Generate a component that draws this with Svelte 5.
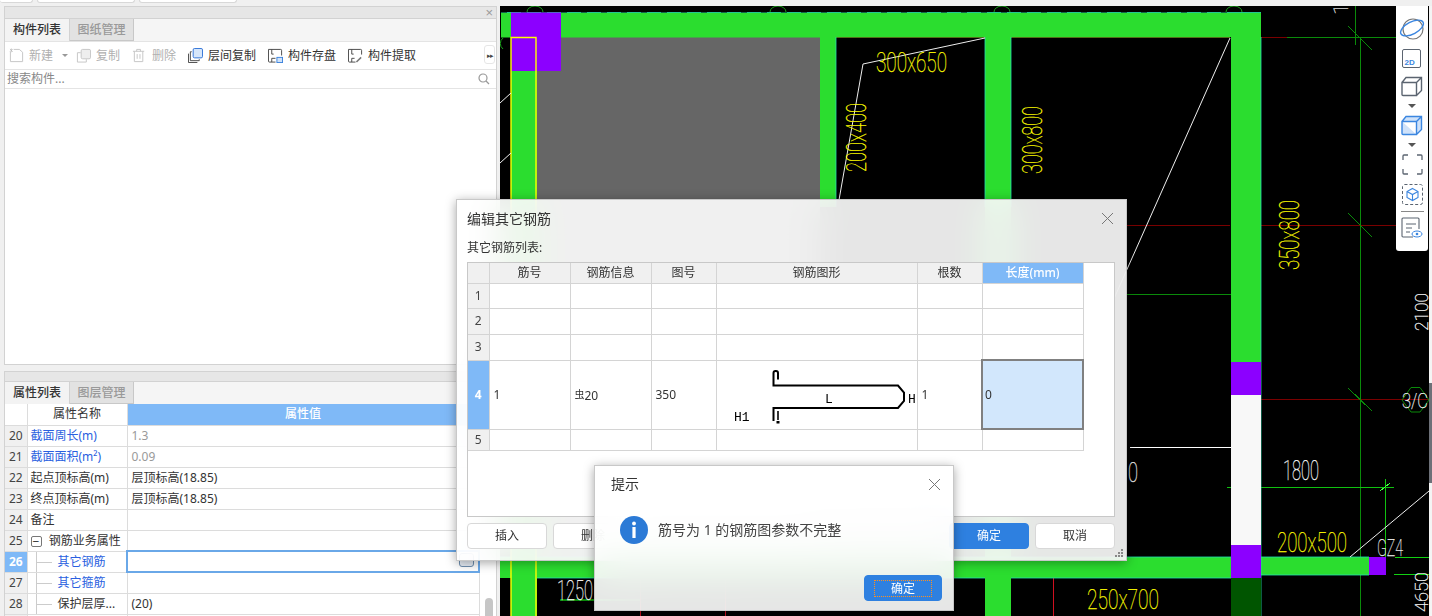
<script>
  const tools = [
    { icon: "new", label: "新建", off: true, caret: true },
    { icon: "copy", label: "复制", off: true },
    { icon: "trash", label: "删除", off: true },
    { icon: "floor", label: "层间复制" },
    { icon: "save", label: "构件存盘" },
    { icon: "pick", label: "构件提取" }
  ];

  const props = [
    { n: 20, name: "截面周长(m)", value: "1.3", link: true, ro: true },
    { n: 21, name: "截面面积(m²)", value: "0.09", link: true, ro: true },
    { n: 22, name: "起点顶标高(m)", value: "层顶标高(18.85)" },
    { n: 23, name: "终点顶标高(m)", value: "层顶标高(18.85)" },
    { n: 24, name: "备注", value: "" },
    { n: 25, name: "钢筋业务属性", value: "", group: true },
    { n: 26, name: "其它钢筋", value: "", link: true, child: true, active: true },
    { n: 27, name: "其它箍筋", value: "", link: true, child: true },
    { n: 28, name: "保护层厚...", value: "(20)", child: true },
    { n: "", name: "", value: "" }
  ];

  const bars = [
    { n: 1 },
    { n: 2 },
    { n: 3 },
    { n: 4, active: true },
    { n: 5 }
  ];

  const cols = ["筋号", "钢筋信息", "图号", "钢筋图形", "根数"];

  // yellow section labels on the drawing: x, y, length, rotated
  const sizes = [
    { t: "300x650", x: 876, y: 72, len: 71, h: 28 },
    { t: "200x500", x: 1277, y: 552, len: 70, h: 28 },
    { t: "250x700", x: 1087, y: 609, len: 72, h: 28 },
    { t: "200x400", x: 866, y: 172, len: 69, h: 28, rot: true },
    { t: "300x800", x: 1042, y: 174, len: 68, h: 28, rot: true },
    { t: "350x800", x: 1299, y: 270, len: 70, h: 28, rot: true }
  ];
</script>

<div class="app">
  <div class="topstrip">
    <span class="toptab first"></span>
    <span class="toptab"></span>
    <span class="toptab"></span>
  </div>

  <div class="main">
    <div class="side">
      <section class="panel upper">
        <div class="band"><span class="bandx">×</span></div>
        <div class="tabs">
          <span class="tab on">构件列表</span>
          <span class="tab">图纸管理</span>
        </div>
        <div class="tools">
          {#each tools as t}
            <span class="tool" class:off={t.off}>
              <svg class="ticon" viewBox="0 0 16 16" fill="none">
                {#if t.icon === "new"}
                  <path d="M1.5 4v10.5h13V4.5L11 1.5H5" stroke="#c4c4c4" />
                  <path d="M1 1l3 3M4 1L1 4M2.5 .5v4" stroke="#bbb" stroke-width=".8" />
                {:else if t.icon === "copy"}
                  <rect x="5.5" y="1.5" width="10" height="10" rx="1.5" stroke="#c4c4c4" fill="#eee" />
                  <path d="M5 5H1.5v10H11v-3" stroke="#c4c4c4" />
                {:else if t.icon === "trash"}
                  <path d="M1 3.5h12M5 3.5V1.5h4v2M2.5 3.5v11h9v-11M5.5 6.5v5M8.5 6.5v5" stroke="#c4c4c4" />
                {:else if t.icon === "floor"}
                  <rect x="5.5" y=".5" width="10" height="10" rx="1.5" stroke="#2b6fd6" fill="#d6e6fa" />
                  <path d="M4 4H2.5v9.5H12V12M.5 6v9.5H10" stroke="#444" />
                {:else if t.icon === "save"}
                  <path d="M8 15H1.5a1 1 0 0 1-1-1V1.5h13a1 1 0 0 1 1 1V8" stroke="#444" />
                  <path d="M4 1.5v5h2M4 15v-4h4" stroke="#444" />
                  <rect x="9.5" y="10" width="6" height="5.5" fill="#cfe2f8" stroke="#3b82dc" />
                {:else}
                  <path d="M8 15H1.5a1 1 0 0 1-1-1V1.5h13a1 1 0 0 1 1 1V7" stroke="#444" />
                  <path d="M4 1.5v5h2M4 15v-4h3" stroke="#444" />
                  <path d="M9 15l5-5" stroke="#777" stroke-width="1.6" />
                {/if}
              </svg>
              <span class="tlabel">{t.label}</span>
              {#if t.caret}<i class="caret"></i>{/if}
            </span>
          {/each}
          <span class="more">▸▸</span>
        </div>
        <div class="search">
          <span>搜索构件...</span>
          <svg width="12" height="12" viewBox="0 0 12 12" fill="none" stroke="#999" stroke-width="1.2">
            <circle cx="5" cy="5" r="4" /><path d="M8 8l3 3" />
          </svg>
        </div>
        <div class="blank"></div>
      </section>

      <section class="panel lower">
        <div class="band short"></div>
        <div class="tabs low">
          <span class="tab on">属性列表</span>
          <span class="tab">图层管理</span>
        </div>
        <div class="propwrap">
          <table class="props">
            <colgroup><col style="width:22px" /><col style="width:100px" /><col /></colgroup>
            <thead>
              <tr><th class="corner"></th><th>属性名称</th><th class="hl">属性值</th></tr>
            </thead>
            <tbody>
              {#each props as p}
                <tr>
                  <td class="num" class:numon={p.active}>{p.n}</td>
                  <td class="name" class:link={p.link}>
                    {#if p.group}
                      <span class="minus">−</span>
                    {/if}
                    {#if p.child}<i class="branch"></i>{/if}
                    {p.name}
                  </td>
                  <td class="val" class:ro={p.ro} class:sel={p.active}>
                    {p.value}
                    {#if p.active}<i class="cellbtn"></i>{/if}
                  </td>
                </tr>
              {/each}
            </tbody>
          </table>
          <div class="scroll"><i></i></div>
        </div>
      </section>
    </div>

    <div class="canvas">
      <svg width="932" height="610" viewBox="500 6 932 610" class="cad">
        <rect x="500" y="6" width="932" height="610" fill="#000" />
        <rect x="1429" y="6" width="3" height="610" fill="#f4f4f4" />

        <!-- axis lines behind everything -->
        <g fill="none" shape-rendering="crispEdges">
          <path d="M1261 37.5H1396M1261 225.5H1396M1261 399.5H1429M836 37.5H985M1011 37.5H1231M1127 225.5H1231" stroke="#7a0000" />
          <path d="M1287 37.5H1396M1355.5 6V45M1360.5 38V616M1348 26L1372 50M1348 213L1372 237M1348 388L1372 411" stroke="#0a8a0a" />
          <path d="M1227 487.5H1394M1385.5 479V557" stroke="#10c010" />
          <path d="M1380 491L1390 483" stroke="#40ff40" />
          <path d="M1127 294.5H1231" stroke="#0a8a0a" />
          <path d="M1130 447.5H1231" stroke="#fff" />
          <path d="M1053.5 578V616M640.5 578V616M725.5 578V616" stroke="#d01020" />
          <path d="M1395 557.5H1429M1394 574.5H1429" stroke="#12d012" />
          <path d="M560 600H640" stroke="#0a8a0a" stroke-width="2" />
        </g>

        <!-- slab -->
        <rect x="537" y="37" width="283" height="523" fill="#666" />

        <!-- beams -->
        <g fill="#2bdd2f">
          <rect x="501" y="12.5" width="760" height="25" />
          <rect x="511" y="37" width="26" height="579" />
          <rect x="820" y="37" width="16" height="170" />
          <rect x="985" y="37" width="26" height="579" />
          <rect x="1231" y="37" width="30" height="325" />
          <rect x="500" y="557" width="731" height="21" />
          <rect x="1261" y="557" width="108" height="18" />
        </g>
        <g fill="none" stroke="#25e0b0" stroke-width=".8">
          <path d="M501 12.5H1261M836 37V207M985 37V207M1011 37V207M1261 37V616M500 557H511M537 557H1231M1261 557H1369M1261 575H1369M537 578H985M1011 578H1231" />
        </g>
        <path d="M501 12H1231" stroke="#000" stroke-dasharray="6 14" fill="none" />
        <path d="M1230.5 37V362" stroke="#000" stroke-dasharray="14 6" fill="none" />

        <rect x="1231" y="395" width="30" height="150" fill="#f8f8f8" />
        <rect x="1231" y="578" width="30" height="38" fill="#005500" />
        <g fill="#8c00ff">
          <rect x="511" y="12.5" width="50" height="58.5" />
          <rect x="1231" y="362" width="30" height="33" />
          <rect x="1231" y="545" width="30" height="33" />
          <rect x="1369" y="557" width="17" height="18" />
        </g>
        <path d="M511 616V37.5H536V616" stroke="#ff0" stroke-width="1.4" fill="none" />

        <!-- grid bubbles along the top edge -->
        <g fill="none" stroke="#18a018">
          <path d="M527 12a8 6 0 0 1 16 0M770 12a8 6 0 0 1 16 0M994 12a8 6 0 0 1 16 0M1226 12a8 6 0 0 1 16 0M503 38a7 7 0 0 0 0 11" />
          <path d="M1402 400l9-12.5h9l9 12.5-9 12h-9z" stroke="#0a8a0a" />
        </g>

        <!-- white slab diagonals -->
        <g fill="none" stroke="#eee">
          <path d="M985 38L863 64L839 200" />
          <path d="M1230 38L1100 330" />
          <path d="M500 103L511 93M500 163L511 153" />
          <path d="M1350 557L1429 491" />
        </g>

        {#each sizes as s}
          <text
            class="cadtext"
            x={s.rot ? 0 : s.x}
            y={s.rot ? 0 : s.y}
            transform={s.rot ? `translate(${s.x} ${s.y}) rotate(-90)` : undefined}
            textLength={s.len}
            lengthAdjust="spacingAndGlyphs"
            font-size={s.h}
            fill="#ffff00"
            stroke="#ffff00"
          >{s.t}</text>
        {/each}

        <text class="cadtext" x="1283" y="480" textLength="36" lengthAdjust="spacingAndGlyphs" font-size="27" fill="#fff" stroke="#fff">1800</text>
        <text class="cadtext" x="1377" y="556" textLength="26" lengthAdjust="spacingAndGlyphs" font-size="24" fill="#eee" stroke="#eee">GZ4</text>
        <text class="cadtext" x="557" y="600" textLength="36" lengthAdjust="spacingAndGlyphs" font-size="27" fill="#fff" stroke="#fff">1250</text>
        <text class="cadtext" x="1128" y="482" textLength="10" lengthAdjust="spacingAndGlyphs" font-size="27" fill="#eee" stroke="#eee">0</text>
        <text class="cadtext" transform="translate(1428 331) rotate(-90)" textLength="38" lengthAdjust="spacingAndGlyphs" font-size="19" fill="#fff" stroke="#fff">2100</text>
        <text class="cadtext" transform="translate(1428 612) rotate(-90)" textLength="40" lengthAdjust="spacingAndGlyphs" font-size="19" fill="#fff" stroke="#fff">4650</text>
        <text class="cadtext" x="1402" y="408" font-size="21" textLength="26" lengthAdjust="spacingAndGlyphs" fill="#fff" stroke="#fff">3/C</text>
        <text class="cadtext" transform="translate(1348 15) rotate(-90)" font-size="21" fill="#ddd" stroke="#ddd">1</text>
        <rect x="1429" y="383" width="3" height="100" fill="#6d7078" />
      </svg>
    </div>
  </div>

  <aside class="viewbar">
    <svg width="26" height="26" viewBox="0 0 26 26" fill="none">
      <circle cx="14" cy="13" r="10" stroke="#777" stroke-width="1.2" />
      <ellipse cx="13" cy="12" rx="12.5" ry="6" transform="rotate(-28 13 12)" stroke="#3b86e0" stroke-width="1.4" />
    </svg>
    <svg width="20" height="20" viewBox="0 0 20 20" fill="none">
      <rect x=".5" y=".5" width="18" height="18" rx="1.5" stroke="#5b6470" />
      <text x="2.5" y="16" class="twod">2D</text>
    </svg>
    <svg width="22" height="21" viewBox="0 0 22 21" fill="none" stroke="#5b6470" stroke-width="1.4">
      <path d="M1 6.5v12a1 1 0 0 0 1 1h13.5v-13zM1 6.5L5 1.5h15.5v13l-5 5M15.5 6.5l5-5" />
    </svg>
    <i class="vcaret"></i>
    <svg width="22" height="21" viewBox="0 0 22 21" fill="#cfe2fa" stroke="#3b86e0" stroke-width="1.4">
      <path d="M1 6.5v12a1 1 0 0 0 1 1h13.5v-13zM1 6.5L5 1.5h15.5v13l-5 5M15.5 6.5l5-5" />
    </svg>
    <i class="vcaret"></i>
    <svg width="21" height="21" viewBox="0 0 21 21" fill="none" stroke="#5b6470" stroke-width="1.3">
      <path d="M1 6V2a1 1 0 0 1 1-1h4M15 1h4a1 1 0 0 1 1 1v4M20 15v4a1 1 0 0 1-1 1h-4M6 20H2a1 1 0 0 1-1-1v-4" />
    </svg>
    <svg class="boxed" width="21" height="21" viewBox="0 0 21 21" fill="none">
      <rect x=".5" y=".5" width="20" height="20" rx="2" stroke="#5b6470" stroke-dasharray="3 2" />
      <path d="M10.5 4.5l5.5 3v6l-5.5 3-5.5-3v-6zM5 7.5l5.5 3 5.5-3M10.5 10.5v6" stroke="#3b86e0" stroke-width="1.1" />
    </svg>
    <hr />
    <svg class="legend" width="22" height="21" viewBox="0 0 22 21" fill="none">
      <path d="M12 20H2a1 1 0 0 1-1-1V2a1 1 0 0 1 1-1h15a1 1 0 0 1 1 1v10" stroke="#5b6470" stroke-width="1.1" />
      <path d="M5 7h10M5 11h6M5 15h4" stroke="#5b6470" />
      <ellipse cx="16" cy="17" rx="5" ry="3" stroke="#3b86e0" />
      <circle cx="16" cy="17" r="1.3" fill="#3b86e0" />
    </svg>
  </aside>

  <div class="dialog editor">
    <header class="dhead">
      <h2>编辑其它钢筋</h2>
      <svg width="13" height="13" viewBox="0 0 13 13" stroke="#777" fill="none"><path d="M1 1l11 11M12 1L1 12" /></svg>
    </header>
    <p class="listlabel">其它钢筋列表:</p>
    <div class="gridbox">
      <table class="bars">
        <colgroup>
          <col style="width:21px" /><col style="width:81px" /><col style="width:81px" /><col style="width:65px" />
          <col style="width:201px" /><col style="width:65px" /><col style="width:101px" />
        </colgroup>
        <thead>
          <tr>
            <th></th>
            {#each cols as c}<th>{c}</th>{/each}
            <th class="hl">长度(mm)</th>
          </tr>
        </thead>
        <tbody>
          {#each bars as b}
            <tr class:tall={b.active} class:last={b.n === 5} class:firstrow={b.n === 1}>
              <td class="num" class:numon={b.active}>{b.n}</td>
              {#if b.active}
                <td>1</td>
                <td><span class="grade">虫</span>20</td>
                <td>350</td>
                <td class="shape">
                  <svg width="200" height="68" viewBox="0 0 200 68" fill="none">
                    <path d="M61 18.5V12a2 2 0 0 0-2-2h-.5a2 2 0 0 0-2 2V24.5H181l6 7V40l-6 7H56.5V60" stroke="#000" stroke-width="2" />
                    <path d="M61 50v9" stroke="#000" stroke-width="1.6" />
                    <rect x="59.5" y="60" width="3" height="2.5" fill="#000" />
                    <text x="108" y="42" class="mono">L</text>
                    <text x="191" y="42" class="mono">H</text>
                    <text x="17" y="60" class="mono">H1</text>
                  </svg>
                </td>
                <td class="count">1</td>
                <td class="editing">0</td>
              {:else}
                <td></td><td></td><td></td><td></td><td></td><td></td>
              {/if}
            </tr>
          {/each}
        </tbody>
      </table>
    </div>
    <footer class="dfoot">
      <button class="btn">插入</button>
      <button class="btn">删除</button>
      <span class="fill"></span>
      <button class="btn primary">确定</button>
      <button class="btn">取消</button>
    </footer>
    <svg class="grip" width="8" height="8" viewBox="0 0 8 8" fill="#888">
      <rect x="6" y="0" width="2" height="2" /><rect x="3" y="3" width="2" height="2" /><rect x="6" y="3" width="2" height="2" />
      <rect x="0" y="6" width="2" height="2" /><rect x="3" y="6" width="2" height="2" /><rect x="6" y="6" width="2" height="2" />
    </svg>
  </div>

  <div class="dialog prompt">
    <header class="phead">
      <h3>提示</h3>
      <svg width="13" height="13" viewBox="0 0 13 13" stroke="#777" fill="none"><path d="M1 1l11 11M12 1L1 12" /></svg>
    </header>
    <div class="pbody">
      <svg width="28" height="28" viewBox="0 0 28 28">
        <circle cx="14" cy="14" r="14" fill="#2b7ad6" />
        <circle cx="14" cy="7.5" r="1.9" fill="#fff" />
        <rect x="12.4" y="11" width="3.2" height="11" fill="#fff" />
      </svg>
      <span>筋号为 1 的钢筋图参数不完整</span>
    </div>
    <div class="pfoot">
      <button class="btn primary okbtn"><span>确定</span></button>
    </div>
  </div>
</div>

<style>
  :global(body) {
    margin: 0;
  }

  .app {
    position: relative;
    width: 1432px;
    height: 616px;
    overflow: hidden;
    background: #f0f0f0;
    color: #333;
    font: 12px/16px "Noto Sans", "Noto Sans CJK SC", sans-serif;
  }

  .topstrip {
    display: flex;
    gap: 4px;
    height: 6px;
    box-sizing: border-box;
  }
  .toptab {
    width: 98px;
    height: 3px;
    box-sizing: border-box;
    background: #fff;
    border: 1px solid #d8d8d8;
    border-top: 0;
    border-radius: 0 0 4px 4px;
  }
  .toptab.first {
    width: 33px;
    border-left: 0;
  }

  .main {
    display: flex;
    height: 610px;
  }

  .side {
    width: 500px;
    box-sizing: border-box;
    padding: 0 3px 0 4px;
    display: flex;
    flex-direction: column;
    gap: 6px;
    flex: none;
  }

  .panel {
    display: flex;
    flex-direction: column;
    border: 1px solid #d2d2d2;
    background: #fff;
    min-height: 0;
  }
  .upper {
    height: 357px;
    flex: none;
  }
  .lower {
    flex: 1;
    border-bottom: 0;
    overflow: hidden;
  }

  .band {
    height: 11px;
    background: #e6e6e6;
    border-bottom: 1px solid #d2d2d2;
    text-align: right;
    flex: none;
  }
  .band.short {
    height: 9px;
  }
  .bandx {
    display: block;
    font: 13px/11px "Liberation Sans", sans-serif;
    color: #999;
    padding-right: 3px;
  }

  .tabs {
    display: flex;
    height: 22px;
    background: #f5f5f5;
    flex: none;
    border-bottom: 1px solid #e4e4e4;
  }
  .tabs.low {
    border-bottom: 0;
  }
  .tab {
    width: 64px;
    text-align: center;
    line-height: 22px;
    font-weight: 500;
    color: #999;
    background: #e2e2e2;
    border-right: 1px solid #c8c8c8;
    border-bottom: 1px solid #c8c8c8;
    box-sizing: border-box;
  }
  .tab.on {
    width: 65px;
    background: #f3f3f3;
    color: #333;
    border-bottom: 0;
    border-right: 1px solid #d2d2d2;
  }

  .tools {
    display: flex;
    align-items: center;
    height: 27px;
    padding-left: 4px;
    border-bottom: 1px solid #e4e4e4;
    flex: none;
    position: relative;
  }
  .tool {
    display: flex;
    align-items: center;
    gap: 5px;
    margin-right: 12px;
    color: #333;
  }
  .tool.off {
    color: #b0b0b0;
  }
  .tool.off:first-child {
    margin-right: 8px;
  }
  .ticon {
    width: 15px;
    height: 15px;
    flex: none;
  }
  .caret {
    width: 0;
    height: 0;
    margin-left: 4px;
    border: 3px solid transparent;
    border-top-color: #999;
    border-bottom: 0;
  }
  .more {
    position: absolute;
    right: 1px;
    top: 3px;
    width: 11px;
    height: 19px;
    line-height: 19px;
    font-size: 7px;
    letter-spacing: -1px;
    text-align: center;
    color: #444;
    border: 1px solid #e6e6e6;
    border-radius: 3px;
    box-sizing: border-box;
  }

  .search {
    display: flex;
    justify-content: space-between;
    align-items: center;
    height: 18px;
    padding: 0 6px 0 2px;
    color: #888;
    border-bottom: 1px solid #e4e4e4;
    flex: none;
  }
  .blank {
    flex: 1;
  }

  .propwrap {
    display: flex;
    background: #fff;
  }
  table {
    border-collapse: collapse;
    table-layout: fixed;
  }
  .props {
    width: 475px;
    flex: none;
  }
  .props th {
    height: 21px;
    padding: 0;
    font-weight: 400;
    border: 1px solid #dcdcdc;
    border-top: 0;
    box-sizing: border-box;
  }
  .props th.corner {
    border-left: 0;
  }
  th.hl {
    background: #7fb9f7;
    color: #fff;
    font-weight: 500;
  }
  .props td {
    height: 21px;
    padding: 0 3px;
    box-sizing: border-box;
    border: 1px solid #dcdcdc;
    white-space: nowrap;
    overflow: hidden;
  }
  .props td.val {
    padding-left: 4px;
  }
  .num {
    background: #f0f0f0;
    text-align: center;
    color: #444;
    padding: 0 !important;
    font-weight: 400;
  }
  .props .num {
    border-left: 0;
  }
  .numon {
    background: #7fb9f7;
    color: #fff;
    font-weight: 700;
  }
  .name.link {
    color: #2a5fe0;
  }
  .ro {
    color: #999;
  }
  .props td.sel {
    border: 2px solid #6aa8e8;
    position: relative;
  }
  .cellbtn {
    position: absolute;
    right: 4px;
    top: 1px;
    width: 15px;
    height: 14px;
    box-sizing: border-box;
    border: 1px solid #6f8fb0;
    border-radius: 3px;
    background: #e8eef6;
  }
  .minus {
    display: inline-block;
    width: 11px;
    height: 11px;
    line-height: 9px;
    text-align: center;
    border: 1px solid #777;
    border-radius: 2px;
    box-sizing: border-box;
    margin-right: 4px;
    vertical-align: -1px;
  }
  .branch {
    display: inline-block;
    width: 16px;
    border-top: 1px solid #ccc;
    margin: 0 3px 0 5px;
    vertical-align: middle;
    position: relative;
  }
  .branch::before {
    content: "";
    position: absolute;
    left: 0;
    top: -12px;
    height: 24px;
    border-left: 1px solid #ccc;
  }
  .scroll {
    flex: 1;
    position: relative;
    background: #fff;
  }
  .scroll i {
    position: absolute;
    left: 5px;
    top: 194px;
    width: 8px;
    height: 30px;
    border-radius: 4px;
    background: #c6c6c6;
  }

  .canvas {
    flex: 1;
    min-width: 0;
  }
  .cad {
    display: block;
  }
  .cadtext {
    font-family: Roboto, "Liberation Sans", sans-serif;
    font-weight: 100;
    stroke-width: 0.25;
  }

  .viewbar {
    position: absolute;
    left: 1396px;
    top: 6px;
    width: 32px;
    height: 245px;
    box-sizing: border-box;
    padding-top: 10px;
    background: #fff;
    border-radius: 0 0 3px 3px;
    display: flex;
    flex-direction: column;
    align-items: center;
    gap: 7px;
  }
  .viewbar svg {
    flex: none;
  }
  .viewbar svg.boxed {
    margin-top: 2px;
  }
  .viewbar svg.legend {
    margin-top: -2px;
  }
  .viewbar hr {
    width: 23px;
    margin: -1px 0 0;
    border: 0;
    border-top: 1px solid #888;
    flex: none;
  }
  .twod {
    font: 700 8px "Liberation Sans", sans-serif;
    fill: #3b86e0;
  }
  .vcaret {
    width: 0;
    height: 0;
    border: 4px solid transparent;
    border-top: 4px solid #555;
    border-bottom: 0;
    flex: none;
  }

  .dialog {
    position: absolute;
    box-sizing: border-box;
    background: rgba(255, 255, 255, 0.9);
    -webkit-backdrop-filter: blur(18px);
    backdrop-filter: blur(18px);
    border: 1px solid #c8c8c8;
    box-shadow: 0 2px 10px rgba(0, 0, 0, 0.35);
  }

  .editor {
    left: 456px;
    top: 199px;
    width: 671px;
    height: 362px;
    padding: 0 11px 0 10px;
    display: flex;
    flex-direction: column;
  }
  .dhead {
    display: flex;
    justify-content: space-between;
    align-items: center;
    height: 37px;
    padding-right: 1px;
    flex: none;
  }
  h2,
  h3 {
    margin: 0;
    font-size: 14px;
    font-weight: 400;
    color: #333;
  }
  .listlabel {
    margin: 0;
    height: 25px;
    line-height: 22px;
    flex: none;
  }
  .gridbox {
    height: 255px;
    box-sizing: border-box;
    border: 1px solid #c8c8c8;
    background: #fff;
    flex: none;
  }
  .bars {
    width: 615px;
  }
  .bars th {
    height: 20px;
    padding: 0;
    font-weight: 400;
    background: #f0f0f0;
    border: 1px solid #d4d4d4;
    border-top: 0;
    box-sizing: border-box;
  }
  .bars th:first-child,
  .bars .num {
    border-left: 0;
  }
  .bars th.hl {
    background: #7fb9f7;
    font-weight: 500;
  }
  .bars td {
    height: 26px;
    padding: 0 4px;
    box-sizing: border-box;
    border: 1px solid #d4d4d4;
  }
  .firstrow td {
    height: 25px;
  }
  .tall td {
    height: 69px;
  }
  .last td {
    height: 21px;
  }
  .bars td.shape {
    padding: 0;
  }
  .shape svg {
    display: block;
  }
  .bars td.editing {
    background: #d2e7fc;
    border: 2px solid #808080;
    padding-left: 2px;
  }
  .count {
    color: #333;
  }
  .grade {
    font-size: 10px;
    vertical-align: 2px;
  }
  .mono {
    font: 13px "Liberation Mono", monospace;
    fill: #000;
  }

  .dfoot {
    display: flex;
    gap: 6px;
    margin-top: 6px;
  }
  .fill {
    flex: 1;
  }
  .btn {
    width: 80px;
    height: 26px;
    padding: 0;
    font: inherit;
    color: #333;
    background: #fff;
    border: 1px solid #d8d8d8;
    border-radius: 4px;
  }
  .btn.primary {
    color: #fff;
    background: #2e80e0;
    border-color: #2e80e0;
  }
  .grip {
    position: absolute;
    right: 3px;
    bottom: 3px;
  }

  .prompt {
    left: 594px;
    top: 465px;
    width: 360px;
    height: 146px;
    padding: 0 11px 0 16px;
    display: flex;
    flex-direction: column;
  }
  .phead {
    display: flex;
    justify-content: space-between;
    align-items: center;
    height: 36px;
    padding-right: 1px;
    flex: none;
  }
  .pbody {
    display: flex;
    align-items: center;
    gap: 10px;
    height: 56px;
    padding-left: 9px;
    font-size: 14px;
    color: #444;
    flex: none;
  }
  .pfoot {
    display: flex;
    justify-content: flex-end;
    margin-top: 17px;
  }
  .okbtn {
    width: 78px;
    padding: 3px 9px;
  }
  .okbtn span {
    display: block;
    height: 17px;
    line-height: 15px;
    box-sizing: border-box;
    border: 1px dotted #ff9020;
  }
</style>
